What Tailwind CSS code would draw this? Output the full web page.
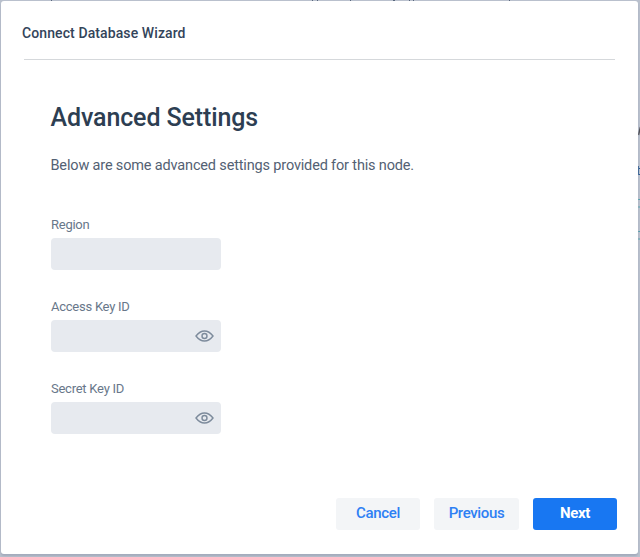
<!DOCTYPE html>
<html lang="en">
<head>
<meta charset="utf-8">
<title>Connect Database Wizard</title>
<script src="https://cdn.jsdelivr.net/npm/@tailwindcss/browser@4"></script>
</head>
<body class="relative h-[557px] w-[640px] overflow-hidden bg-[#b9c0cd] pt-px pl-px font-['Roboto',sans-serif] antialiased">
  <!-- page behind the dialog -->
  <svg class="absolute inset-0" width="640" height="557" aria-hidden="true">
    <g fill="#58677d"><path d="M51 0h1v1h-1zM312 0h1v1h-1zM317 0h1v1h-1zM350 0h1v1h-1zM393 0h2v1h-2zM409 0h1v1h-1zM413 0h1v1h-1zM509 0h1v1h-1z"/></g>
    <path d="M640.500 127l-2 8" stroke="#49484e" stroke-width="1.500"/>
    <path d="M638 168.500h2M638 174.500h2M638.500 166v9" stroke="#27588f"/>
    <path d="M638 199.500h2M638 207h2M638 231.500h2M638 239h2" stroke="#52a1ad"/>
  </svg>
  <main class="relative flex h-[553px] w-[637px] flex-col rounded-[3px] bg-white shadow-[0_2px_2px_#a3abbc]">
    <header class="mx-[23px] flex h-[59px] shrink-0 items-center border-b border-[#d5d8db] pt-[6px]">
      <h1 class="-ml-[2px] text-[14px] leading-5 font-medium tracking-[0.1px] text-[#33445a]">Connect Database Wizard</h1>
    </header>
    <section class="flex flex-col items-start px-[49.5px] pt-[40px]">
      <h2 class="text-[25px] leading-9 font-medium tracking-[-0.12px] text-[#2d3e52]">Advanced Settings</h2>
      <p class="mt-[20px] text-[14.5px] leading-5 tracking-[-0.16px] text-[#536173]">Below are some advanced settings provided for this node.</p>
      <div class="mt-[42px] flex flex-col gap-[30px]">
        <div>
          <div class="mb-[6px] pl-[0.500px] text-[13px] leading-[14px] tracking-[-0.25px] text-[#68778a]">Region</div>
          <div class="h-8 w-[170px] rounded-[4px] bg-[#e7eaef]"></div>
        </div>
        <div>
          <div class="mb-[6px] pl-[0.500px] text-[13px] leading-[14px] tracking-[-0.25px] text-[#68778a]">Access Key ID</div>
          <div class="flex h-8 w-[170px] items-center justify-end rounded-[4px] bg-[#e7eaef] pr-[6.500px]">
            <svg width="19" height="12" viewBox="0 0 19 12" fill="none" stroke="#7d8b9c" stroke-width="1.400"><path d="M1 6Q4.800 1 9.500 1T18 6Q14.200 11 9.500 11T1 6Z"/><circle cx="9.500" cy="6" r="2.500"/></svg>
          </div>
        </div>
        <div>
          <div class="mb-[6px] pl-[0.500px] text-[13px] leading-[14px] tracking-[-0.25px] text-[#68778a]">Secret Key ID</div>
          <div class="flex h-8 w-[170px] items-center justify-end rounded-[4px] bg-[#e7eaef] pr-[6.500px]">
            <svg width="19" height="12" viewBox="0 0 19 12" fill="none" stroke="#7d8b9c" stroke-width="1.400"><path d="M1 6Q4.800 1 9.500 1T18 6Q14.200 11 9.500 11T1 6Z"/><circle cx="9.500" cy="6" r="2.500"/></svg>
          </div>
        </div>
      </div>
    </section>
    <footer class="mt-auto flex justify-end gap-[14px] pr-[21px] pb-[24px] text-[15px] font-medium tracking-[-0.35px]">
      <button class="h-8 w-[84px] rounded-[3px] bg-[#f3f5f7] pb-[2px] text-[#2d80f4]">Cancel</button>
      <button class="h-8 w-[85px] rounded-[3px] bg-[#f3f5f7] pb-[2px] text-[#2d80f4]">Previous</button>
      <button class="h-8 w-[84px] rounded-[3px] bg-[#1877f2] pb-[2px] font-bold text-white">Next</button>
    </footer>
  </main>
</body>
</html>
